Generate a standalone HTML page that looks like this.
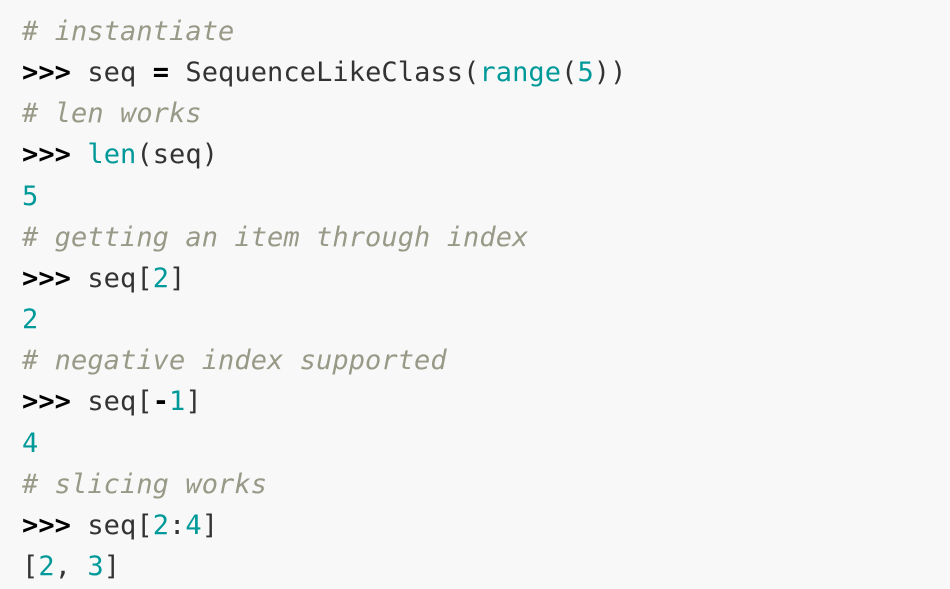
<!DOCTYPE html>
<html><head><meta charset="utf-8"><style>
html,body{margin:0;padding:0;background:#f8f8f8;width:950px;height:589px;overflow:hidden}
pre{margin:0;padding:11px 0 0 22px;font-family:"DejaVu Sans Mono","Liberation Mono",monospace;font-size:27px;line-height:41.15px;letter-spacing:0.08px;color:#333}
.c{color:#998;font-style:italic}
.p{color:#000;font-weight:bold}
.n{color:#099}
.o{font-weight:bold;color:#000}
</style></head><body><pre><span class="c"># instantiate</span>
<span class="p">&gt;&gt;&gt;</span> seq <span class="o">=</span> SequenceLikeClass(<span class="n">range</span>(<span class="n">5</span>))
<span class="c"># len works</span>
<span class="p">&gt;&gt;&gt;</span> <span class="n">len</span>(seq)
<span class="n">5</span>
<span class="c"># getting an item through index</span>
<span class="p">&gt;&gt;&gt;</span> seq[<span class="n">2</span>]
<span class="n">2</span>
<span class="c"># negative index supported</span>
<span class="p">&gt;&gt;&gt;</span> seq[<span class="o">-</span><span class="n">1</span>]
<span class="n">4</span>
<span class="c"># slicing works</span>
<span class="p">&gt;&gt;&gt;</span> seq[<span class="n">2</span>:<span class="n">4</span>]
[<span class="n">2</span>, <span class="n">3</span>]</pre></body></html>
